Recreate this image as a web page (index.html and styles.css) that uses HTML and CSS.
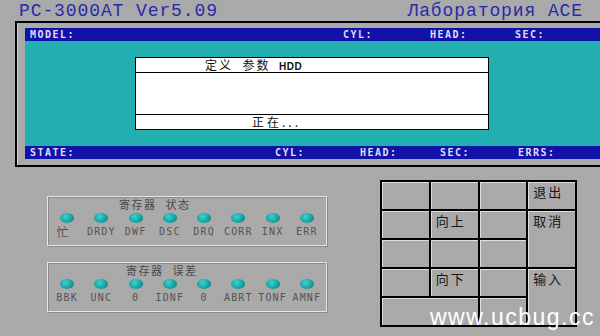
FILE: index.html
```html
<!DOCTYPE html>
<html lang="zh">
<head>
  <meta charset="UTF-8" />
  <title>PC-3000AT Ver5.09</title>
  <link rel="stylesheet" href="styles.css">
</head>
<body>
  <header class="title-row">
    <span class="title">PC-3000AT Ver5.09</span>
    <span class="title">Лаборатория ACE</span>
  </header>

  <section class="panel">
    <div class="bar">
      <span class="lbl" style="width:313px">MODEL:</span>
      <span class="lbl" style="width:87px">CYL:</span>
      <span class="lbl" style="width:85px">HEAD:</span>
      <span class="lbl">SEC:</span>
    </div>
    <div class="screen">
      <div class="dialog">
        <div class="dlg-head">定义&nbsp;&nbsp;参数 <b>HDD</b></div>
        <div class="dlg-body"></div>
        <div class="dlg-foot">正在...</div>
      </div>
    </div>
    <div class="bar">
      <span class="lbl" style="width:245px">STATE:</span>
      <span class="lbl" style="width:85px">CYL:</span>
      <span class="lbl" style="width:80px">HEAD:</span>
      <span class="lbl" style="width:78px">SEC:</span>
      <span class="lbl">ERRS:</span>
    </div>
  </section>

  <main class="lower">
    <div class="regs">
      <div class="reg-box">
        <div class="reg-title first">寄存器<span class="sp"></span>状态</div>
        <div class="leds">
          <div class="led-cell"><i class="led"></i><span class="cjk">忙</span></div>
          <div class="led-cell"><i class="led"></i><span>DRDY</span></div>
          <div class="led-cell"><i class="led"></i><span>DWF</span></div>
          <div class="led-cell"><i class="led"></i><span>DSC</span></div>
          <div class="led-cell"><i class="led"></i><span>DRQ</span></div>
          <div class="led-cell"><i class="led"></i><span>CORR</span></div>
          <div class="led-cell"><i class="led"></i><span>INX</span></div>
          <div class="led-cell"><i class="led"></i><span>ERR</span></div>
        </div>
      </div>
      <div class="reg-box">
        <div class="reg-title second">寄存器<span class="sp"></span>误差</div>
        <div class="leds">
          <div class="led-cell"><i class="led"></i><span>BBK</span></div>
          <div class="led-cell"><i class="led"></i><span>UNC</span></div>
          <div class="led-cell"><i class="led"></i><span>0</span></div>
          <div class="led-cell"><i class="led"></i><span>IDNF</span></div>
          <div class="led-cell"><i class="led"></i><span>0</span></div>
          <div class="led-cell"><i class="led"></i><span>ABRT</span></div>
          <div class="led-cell"><i class="led"></i><span>TONF</span></div>
          <div class="led-cell"><i class="led"></i><span>AMNF</span></div>
        </div>
      </div>
    </div>

    <div class="keys">
      <div class="key"></div>
      <div class="key"></div>
      <div class="key"></div>
      <div class="key">退出</div>
      <div class="key"></div>
      <div class="key">向上</div>
      <div class="key"></div>
      <div class="key tall">取消</div>
      <div class="key"></div>
      <div class="key"></div>
      <div class="key"></div>
      <div class="key"></div>
      <div class="key">向下</div>
      <div class="key"></div>
      <div class="key tall">输入</div>
      <div class="key wide"></div>
      <div class="key"></div>
    </div>
  </main>

  <div class="watermark">www.ucbug.cc</div>
</body>
</html>
```

FILE: styles.css
```css
html, body { margin: 0; }
body {
  width: 600px;
  height: 336px;
  overflow: hidden;
  position: relative;
  background: repeating-conic-gradient(#a3a3a3 0 25%, #b0b0b0 0 50%) 0 0 / 2px 2px;
  font-family: "Liberation Sans", "Noto Sans CJK SC", sans-serif;
}

/* title */
.title-row {
  display: flex;
  justify-content: space-between;
  height: 21px;
  padding: 0 17px 0 19px;
}
.title {
  font-family: "Liberation Mono", monospace;
  font-size: 18px;
  line-height: 22px;
  letter-spacing: 0.9px;
  color: #2a2aa6;
}

/* main panel */
.panel {
  margin-left: 15px;
  border: 2px solid #000;
  border-right: 0;
  padding: 5px 0 6px 8px;
  box-shadow: inset 1px 0 0 #d4d4d4;
}
.bar {
  display: flex;
  height: 13px;
  padding-left: 5px;
  background: #1212a8;
}
.lbl {
  font-family: "DejaVu Sans Mono", monospace;
  font-weight: bold;
  font-size: 10px;
  line-height: 13px;
  letter-spacing: 1.5px;
  color: #dcdcf6;
}
.screen {
  height: 105px;
  padding: 16px 0 0 110px;
  box-sizing: border-box;
  background: repeating-conic-gradient(#1eaaaa 0 25%, #28b4b4 0 50%) 0 0 / 2px 2px;
}
.dialog {
  width: 352px;
  border: 1px solid #000;
  background: #fff;
  font-family: "Noto Sans CJK SC", sans-serif;
  font-size: 12px;
  color: #111;
}
.dlg-head, .dlg-foot {
  height: 14px;
  line-height: 14px;
  letter-spacing: 2px;
}
.dlg-head { padding-left: 69px; }
.dlg-head b {
  font-family: "Liberation Sans", sans-serif;
  font-size: 10px;
  letter-spacing: 0.5px;
  margin-left: 4px;
}
.dlg-body {
  height: 41px;
  border-top: 1px solid #000;
  border-bottom: 1px solid #000;
}
.dlg-foot { padding-left: 116px; letter-spacing: 3px; }

/* lower area */
.lower {
  display: flex;
  padding-left: 47px;
}
.regs {
  width: 280px;
  padding-top: 29px;
}
.reg-box {
  height: 48px;
  border: 1px solid #e6e6e6;
  box-shadow: inset 1px 1px 0 #8a8a8a, 1px 1px 0 #8a8a8a;
  margin-bottom: 16px;
  padding: 0 2px;
}
.reg-title {
  font-family: "Noto Sans CJK SC", sans-serif;
  font-size: 11px;
  line-height: 15px;
  letter-spacing: 1.5px;
  color: #4a4a4a;
}
.reg-title.first { padding-left: 69px; }
.reg-title.second { padding-left: 76px; }
.sp { display: inline-block; width: 9px; }
.leds {
  display: grid;
  grid-template-columns: repeat(8, 1fr);
}
.led-cell {
  display: flex;
  flex-direction: column;
  align-items: center;
}
.led {
  width: 14px;
  height: 10px;
  margin-top: 1px;
  border-radius: 50%;
  background: radial-gradient(circle at 40% 35%, #3fd0d0, #12a0a0 60%, #0c6e6e);
}
.led-cell span {
  font-family: "DejaVu Sans Mono", monospace;
  font-size: 10px;
  line-height: 18px;
  letter-spacing: 1.2px;
  color: #545454;
}
.led-cell span.cjk {
  font-family: "Noto Sans CJK SC", sans-serif;
  font-size: 12px;
  margin-right: 8px;
}

/* key pad */
.keys {
  margin: 13px 0 0 53px;
  width: 193px;
  height: 143px;
  padding: 2px;
  background: #000;
  display: grid;
  grid-template-columns: repeat(4, 1fr);
  grid-template-rows: repeat(5, 1fr);
  gap: 2px;
}
.key {
  background: repeating-conic-gradient(#a3a3a3 0 25%, #b0b0b0 0 50%) 0 0 / 2px 2px;
  border-top: 1px solid #dedede;
  border-left: 1px solid #dedede;
  padding: 1px 0 0 4px;
  font-family: "Noto Sans CJK SC", sans-serif;
  font-size: 13px;
  line-height: 16px;
  letter-spacing: 2px;
  color: #151515;
}
.key.tall { grid-row: span 2; }
.key.wide { grid-column: span 2; }

.watermark {
  position: absolute;
  left: 430px;
  top: 304px;
  font-family: "Liberation Sans", sans-serif;
  font-size: 23px;
  letter-spacing: 1.5px;
  color: #fff;
  white-space: nowrap;
}
```
